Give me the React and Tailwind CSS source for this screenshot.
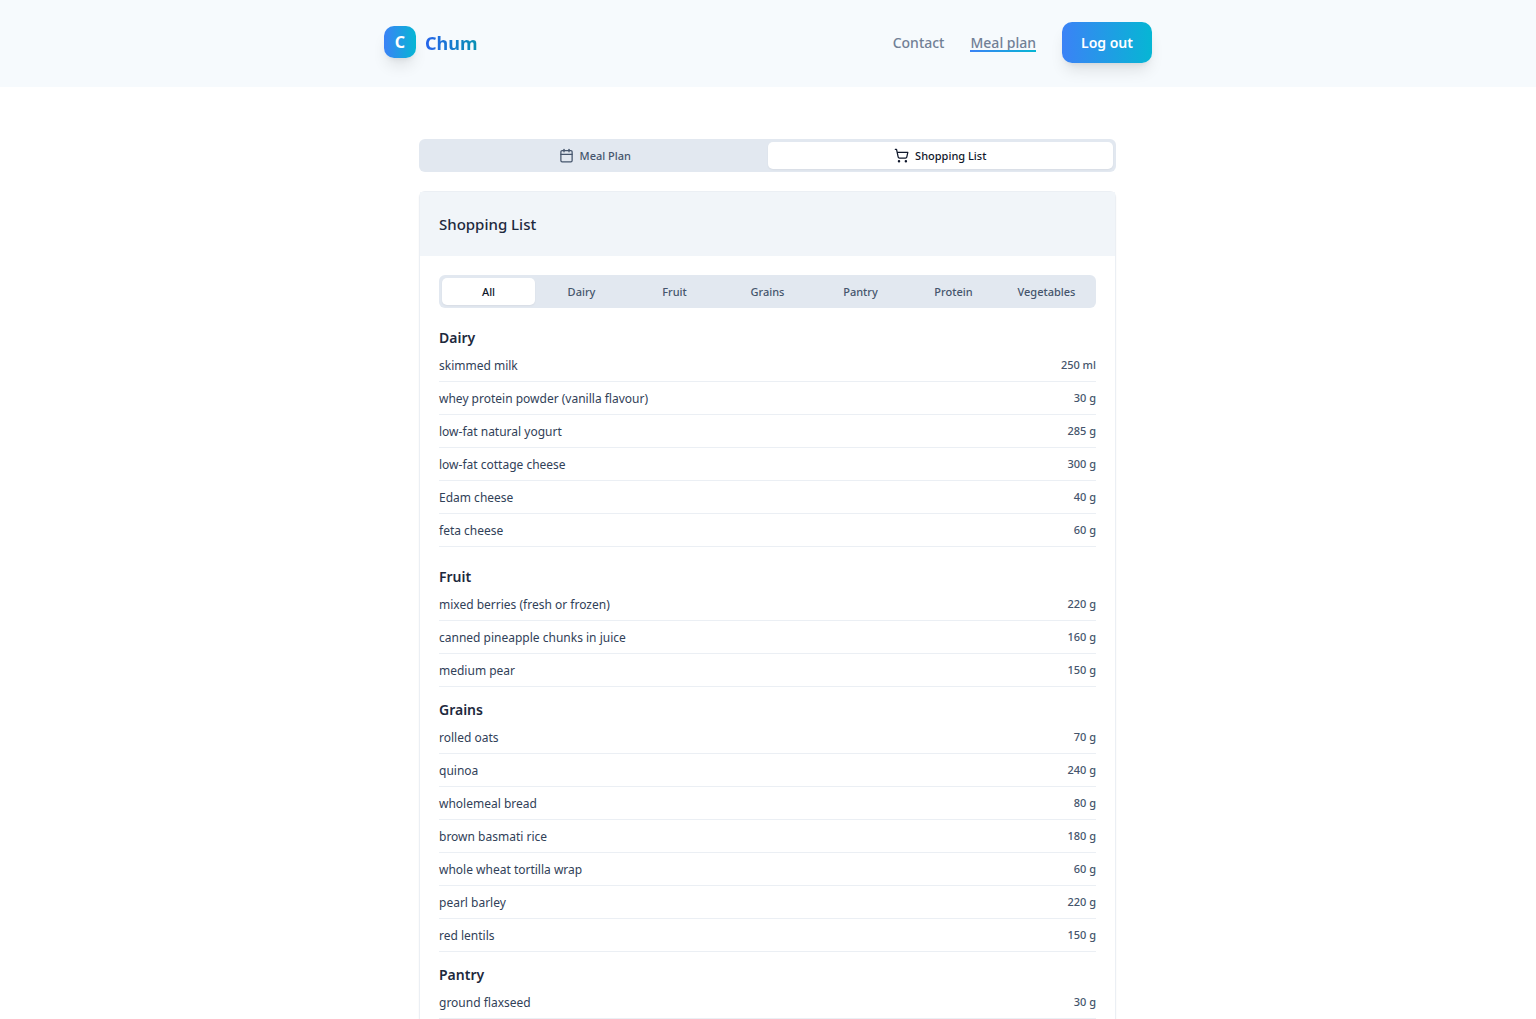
import React, { useState } from 'react';
import { Calendar, ShoppingCart } from 'lucide-react';

const categories = ['All', 'Dairy', 'Fruit', 'Grains', 'Pantry', 'Protein', 'Vegetables'];

const shoppingList = [
  {
    category: 'Dairy',
    items: [
      { name: 'skimmed milk', amount: '250 ml' },
      { name: 'whey protein powder (vanilla flavour)', amount: '30 g' },
      { name: 'low-fat natural yogurt', amount: '285 g' },
      { name: 'low-fat cottage cheese', amount: '300 g' },
      { name: 'Edam cheese', amount: '40 g' },
      { name: 'feta cheese', amount: '60 g' },
    ],
  },
  {
    category: 'Fruit',
    items: [
      { name: 'mixed berries (fresh or frozen)', amount: '220 g' },
      { name: 'canned pineapple chunks in juice', amount: '160 g' },
      { name: 'medium pear', amount: '150 g' },
    ],
  },
  {
    category: 'Grains',
    items: [
      { name: 'rolled oats', amount: '70 g' },
      { name: 'quinoa', amount: '240 g' },
      { name: 'wholemeal bread', amount: '80 g' },
      { name: 'brown basmati rice', amount: '180 g' },
      { name: 'whole wheat tortilla wrap', amount: '60 g' },
      { name: 'pearl barley', amount: '220 g' },
      { name: 'red lentils', amount: '150 g' },
    ],
  },
  {
    category: 'Pantry',
    items: [{ name: 'ground flaxseed', amount: '30 g' }],
  },
];

const Header = () => (
  <header className="bg-[#f6fafd]">
    <div className="mx-auto flex h-[87px] max-w-3xl items-center justify-between pb-[3px]">
      <a href="#home" className="flex items-center gap-[9px]">
        <span className="flex size-8 items-center justify-center rounded-[10px] bg-linear-to-r/srgb from-[#3b82f6] to-[#06b6d4] text-base font-bold text-white shadow-lg">
          C
        </span>
        <span className="bg-linear-to-r/srgb from-[#2563eb] to-[#0891b2] bg-clip-text pt-[2px] text-lg font-bold text-transparent">
          Chum
        </span>
      </a>

      <nav className="flex items-center gap-[26px] text-sm font-medium text-[#718096]">
        <a href="#contact" className="pt-[2px]">
          Contact
        </a>
        <a href="#meal-plan" className="relative pt-[2px]">
          Meal plan
          <span className="absolute inset-x-0 bottom-px h-[2px] bg-linear-to-r/srgb from-[#3b82f6] to-[#06b6d4]" />
        </a>
        <button
          type="button"
          className="h-[41px] rounded-[10px] bg-linear-to-r/srgb from-[#3b82f6] to-[#06b6d4] px-[19px] pt-[2px] font-semibold text-white shadow-lg"
        >
          Log out
        </button>
      </nav>
    </div>
  </header>
);

const TabButton = ({ active, onClick, icon: Icon, label }) => (
  <button
    type="button"
    role="tab"
    aria-selected={active}
    onClick={onClick}
    className={`flex h-[27px] flex-1 basis-0 items-center justify-center gap-[6px] rounded-[5px] text-[11px] font-medium ${
      active ? 'bg-white text-slate-900 shadow-xs' : 'text-slate-600'
    }`}
  >
    {Icon && <Icon size={15} />}
    <span className="pt-[2px]">{label}</span>
  </button>
);

const ShoppingSection = ({ category, items }) => (
  <section className="mb-[13px] first:mb-5">
    <h3 className="pb-px text-sm leading-5 font-semibold text-slate-800">{category}</h3>
    <ul>
      {items.map((item) => (
        <li
          key={item.name}
          className="flex h-[33px] items-center justify-between border-b border-slate-200/70"
        >
          <span className="pt-[2px] text-xs text-slate-700">{item.name}</span>
          <span className="text-[11px] font-medium text-slate-600">{item.amount}</span>
        </li>
      ))}
    </ul>
  </section>
);

export default function App() {
  const [view, setView] = useState('shopping');
  const [category, setCategory] = useState('All');

  const sections = shoppingList.filter(
    (section) => category === 'All' || section.category === category
  );

  return (
    <div className="min-h-screen bg-white font-['Noto_Sans',sans-serif]">
      <Header />

      <main className="mx-auto max-w-3xl pt-[52px] pr-9 pl-[35px]">
        <div role="tablist" className="flex rounded-md bg-slate-200 p-[3px]">
          <TabButton
            active={view === 'meals'}
            onClick={() => setView('meals')}
            icon={Calendar}
            label="Meal Plan"
          />
          <TabButton
            active={view === 'shopping'}
            onClick={() => setView('shopping')}
            icon={ShoppingCart}
            label="Shopping List"
          />
        </div>

        <div className="mt-[19px] rounded-md border border-slate-200/70 shadow-xs">
          <div className="flex h-16 items-center bg-slate-100 px-[19px]">
            <h2 className="text-[15px] font-medium text-slate-800">Shopping List</h2>
          </div>

          <div className="p-[19px]">
            <div role="tablist" className="flex rounded-md bg-slate-200 p-[3px]">
              {categories.map((name) => (
                <TabButton
                  key={name}
                  active={category === name}
                  onClick={() => setCategory(name)}
                  label={name}
                />
              ))}
            </div>

            <div className="mt-5">
              {sections.map((section) => (
                <ShoppingSection key={section.category} {...section} />
              ))}
            </div>
          </div>
        </div>
      </main>
    </div>
  );
}
